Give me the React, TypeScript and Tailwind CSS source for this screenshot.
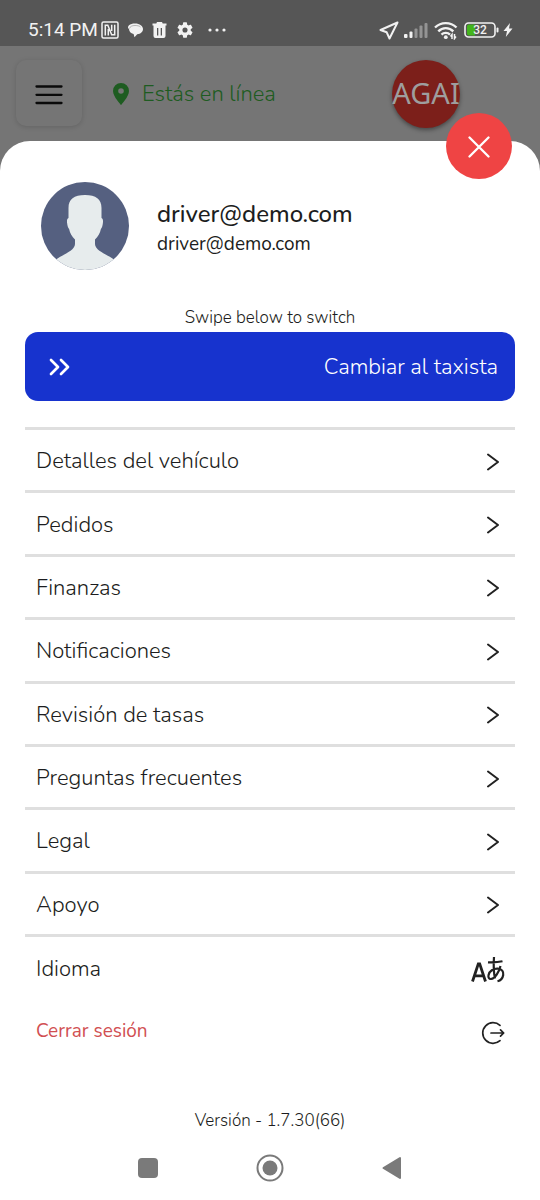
import React from 'react';

const menuItems: string[] = [
  'Detalles del vehículo',
  'Pedidos',
  'Finanzas',
  'Notificaciones',
  'Revisión de tasas',
  'Preguntas frecuentes',
  'Legal',
  'Apoyo',
];

function StatusBar() {
  return (
    <div className="flex h-[46px] items-center justify-between bg-[#565656] pt-[14px] pr-[27px] pl-7 text-[#f2f2f2]">
      <div className="flex items-center">
        <span className="w-[73px] font-['Roboto',sans-serif] text-[19px] leading-6 whitespace-nowrap">5:14 PM</span>
        <svg width="18" height="18" viewBox="0 0 18 18" fill="none" stroke="currentColor" strokeWidth="1.5" aria-hidden="true">
          <rect x="1" y="1" width="16" height="16" rx="1.5" />
          <path d="M4.300 14.500V4.300H6.800L10.700 13.700H13.700V3.800M7.300 14.500V8M10.700 3.800V10" />
        </svg>
        <svg className="ml-2" width="17" height="18" viewBox="0 0 17 18" aria-hidden="true">
          <path fill="currentColor" d="M8 2.500c4.800 0 8 2.500 8 5.500 0 2.900-2.300 4.800-5.800 5.300L7.500 16.300l-.9-3.400C3.600 12.300 2.200 10.500 2 8 .5 7.200.8 5.400 2 4.300 3.300 3 5.400 2.500 8 2.500Z" />
          <path fill="none" stroke="#999" strokeWidth=".7" d="M2.500 7.500c.5-2 2.500-3 5.500-3 2.600 0 4.400.5 5.500 1.500" />
        </svg>
        <svg className="ml-2" width="15" height="18" viewBox="0 0 15 18" aria-hidden="true">
          <path fill="currentColor" fillRule="evenodd" d="M5 1h5l.7 1.500h3.800v2H.5v-2h3.800ZM1.500 4.500h12V15a2 2 0 0 1-2 2h-8a2 2 0 0 1-2-2ZM5 7v7.500h1.300V7Zm3.700 0v7.500H10V7Z" />
        </svg>
        <svg className="ml-2.5" width="16" height="16" viewBox="2 2 20 20" fill="currentColor" aria-hidden="true">
          <path d="M19.140 12.940c.040-.300.060-.610.060-.940s-.020-.640-.070-.940l2.030-1.580a.49.49 0 0 0 .120-.610l-1.920-3.320a.49.49 0 0 0-.590-.220l-2.390.960a7 7 0 0 0-1.620-.940l-.360-2.540a.48.48 0 0 0-.480-.410h-3.840a.47.47 0 0 0-.470.410l-.360 2.540c-.590.240-1.130.570-1.620.940l-2.390-.960a.47.47 0 0 0-.590.220L2.740 8.870a.47.47 0 0 0 .120.610l2.030 1.580c-.050.300-.090.630-.090.940s.020.640.070.940l-2.030 1.580a.49.49 0 0 0-.120.610l1.920 3.320c.120.220.370.290.590.220l2.390-.960c.500.380 1.030.700 1.620.940l.360 2.540c.050.240.240.410.480.410h3.840c.240 0 .440-.170.470-.410l.360-2.540c.590-.240 1.130-.560 1.620-.940l2.390.960c.220.080.470 0 .590-.220l1.920-3.320a.47.47 0 0 0-.120-.610ZM12 15.200a3.200 3.200 0 1 1 0-6.400 3.200 3.200 0 0 1 0 6.400Z" />
        </svg>
        <svg className="ml-3.5" width="20" height="6" viewBox="0 0 20 6" fill="currentColor" aria-hidden="true">
          <circle cx="3" cy="3" r="1.600" /><circle cx="10" cy="3" r="1.600" /><circle cx="17" cy="3" r="1.600" />
        </svg>
      </div>
      <div className="flex items-center">
        <svg width="20" height="20" viewBox="0 0 20 20" fill="none" stroke="currentColor" strokeWidth="2" strokeLinejoin="round" aria-hidden="true">
          <path d="M18.500 2.500 1.500 10l6.200 2.300 2.800 6.200Z" />
        </svg>
        <svg className="ml-[5px]" width="24" height="18" viewBox="0 0 24 18" fill="currentColor" aria-hidden="true">
          <rect x="0" y="13" width="3.500" height="4" rx="1" />
          <rect x="5.500" y="10.500" width="3" height="6.500" rx="1" />
          <g opacity=".4"><rect x="10.500" y="7.500" width="3" height="9.500" rx="1" /><rect x="15.500" y="4.500" width="3" height="12.500" rx="1" /><rect x="20.500" y="2" width="3" height="15" rx="1" /></g>
        </svg>
        <svg className="ml-1.5" width="24" height="20" viewBox="0 0 24 20" fill="none" stroke="currentColor" strokeWidth="2.400" aria-hidden="true">
          <path d="M1 7.500a15.500 15.500 0 0 1 21.500 0M4.300 11.300a10.500 10.500 0 0 1 15 0M7.500 14.600a6 6 0 0 1 8.500 0" />
          <circle cx="11.800" cy="17.200" r="1.900" fill="currentColor" stroke="none" />
          <path strokeWidth="1.500" d="M18 19v-4.500l-1.500 2M20.500 14v4.500l1.500-2" />
        </svg>
        <svg className="ml-1.5" width="36" height="18" viewBox="0 0 36 18" role="img" aria-label="32%">
          <path fill="#43b41c" d="M5 3.500h6v11H5A2 2 0 0 1 3 12.500v-7A2 2 0 0 1 5 3.500Z" />
          <rect x="1" y="2" width="30" height="14" rx="3.500" fill="none" stroke="currentColor" strokeWidth="1.600" />
          <rect x="32.500" y="6.500" width="2" height="5" rx="1" fill="currentColor" />
          <text x="16" y="13" textAnchor="middle" fontSize="12" fontFamily="Roboto, sans-serif" fontWeight="500" fill="currentColor">32</text>
        </svg>
        <svg className="ml-[3px]" width="10" height="16" viewBox="0 0 10 16" fill="currentColor" aria-hidden="true">
          <path d="M7 1 .5 9H4L2.800 15 9.500 6.500H6Z" />
        </svg>
      </div>
    </div>
  );
}

function Header() {
  return (
    <header className="flex h-[95px] items-start pt-[14px] pl-4">
      <button type="button" aria-label="Menú" className="flex h-[66px] w-[66px] items-center justify-center rounded-[10px] bg-[#757575] shadow-[0_1px_5px_rgba(0,0,0,0.15)]">
        <svg className="mt-[3px]" width="28" height="22" viewBox="0 0 28 22" stroke="#0a0a0a" strokeWidth="2.300" strokeLinecap="round" aria-hidden="true">
          <path d="M1.500 2.500h25M1.500 10.800h25M1.500 19h25" />
        </svg>
      </button>
      <div className="ml-[30px] flex h-[68px] items-center text-[#1e5c21]">
        <svg width="18" height="24" viewBox="0 0 18 24" aria-hidden="true">
          <path fill="currentColor" fillRule="evenodd" d="M9 1a8 8 0 0 0-8 8c0 5.600 8 14 8 14s8-8.400 8-14a8 8 0 0 0-8-8Zm0 5.200a2.800 2.800 0 1 1 0 5.600 2.800 2.800 0 0 1 0-5.600Z" />
        </svg>
        <span className="ml-3 text-[22px] leading-7 font-light">Estás en línea</span>
      </div>
      <div className="mr-20 ml-auto flex h-[68px] w-[68px] items-center justify-center rounded-full bg-[#7c1f1a] pb-0.5 font-['Noto_Sans',sans-serif] text-[29px] leading-8 text-[#9e9e9e] shadow-[0_2px_4px_rgba(0,0,0,0.4)]">
        <span>AGAI</span>
      </div>
    </header>
  );
}

function Avatar() {
  return (
    <svg className="shrink-0" width="88" height="88" viewBox="0 0 88 88" role="img" aria-label="Foto de perfil">
      <defs>
        <clipPath id="avatar-clip"><circle cx="44" cy="44" r="44" /></clipPath>
      </defs>
      <g clipPath="url(#avatar-clip)">
        <rect width="88" height="88" fill="#556080" />
        <path fill="#e7eced" d="M44 13c11 0 16.500 4 16.500 13v10c1.500.5 1.700 2.500 1.400 5-.3 3-1 5-2 6-.8 4-2.900 7.500-5.900 10.500V62c0 7 13.500 11 19 15.500L70 90H18l-3-12.500C20.500 73 34 69 34 62v-4.500C31 54.500 28.900 51 28.100 47c-1-1-1.700-3-2-6-.3-2.500-.1-4.500 1.400-5V26c0-9 5.500-13 16.500-13Z" />
      </g>
    </svg>
  );
}

export default function App() {
  return (
    <div className="flex min-h-screen flex-col bg-[#757575] font-['Nunito','Noto_Sans',sans-serif] text-[#1c1d20]">
      <StatusBar />
      <Header />
      <main className="relative flex flex-1 flex-col rounded-t-[30px] bg-white px-[25px] pt-[41px]">
        <button type="button" aria-label="Cerrar" className="absolute -top-7 right-7 flex h-[66px] w-[66px] items-center justify-center rounded-full bg-[#ef4444] text-white">
          <svg className="mt-0.5" width="22" height="22" viewBox="0 0 22 22" fill="none" stroke="currentColor" strokeWidth="2.300" strokeLinecap="round" aria-hidden="true">
            <path d="m1.500 1.500 19 19m0-19-19 19" />
          </svg>
        </button>

        <div className="flex items-center pl-4">
          <Avatar />
          <div className="ml-7 flex flex-col pt-[3px]">
            <h1 className="text-[24px] leading-8 font-medium">driver@demo.com</h1>
            <p className="text-[19px] leading-7">driver@demo.com</p>
          </div>
        </div>

        <p className="mt-9 text-center text-[17px] leading-6 font-light">Swipe below to switch</p>
        <button type="button" className="mt-0.5 flex h-[69px] items-center justify-between rounded-[13px] bg-[#1733ce] pr-[17px] pl-6 text-[22px] leading-7 font-light text-white">
          <svg width="21" height="18" viewBox="0 0 21 18" fill="none" stroke="currentColor" strokeWidth="2.700" strokeLinecap="round" strokeLinejoin="round" aria-hidden="true">
            <path d="m2 2 7 7-7 7M12 2l7 7-7 7" />
          </svg>
          <span>Cambiar al taxista</span>
        </button>

        <nav className="mt-[26px] flex flex-1 flex-col border-t-[3px] border-[#dfdfdf]">
          {menuItems.map((label) => (
            <a key={label} href="#" className="flex min-h-[63px] flex-1 items-center justify-between border-b-[3px] border-[#dfdfdf] pt-0.5 pr-4 pl-[11px] text-[22px] leading-7 font-light">
              <span>{label}</span>
              <svg className="mt-px" width="12" height="18" viewBox="0 0 12 18" fill="none" stroke="#222" strokeWidth="2" strokeLinecap="round" strokeLinejoin="round" aria-hidden="true">
                <path d="m1 1.500 10 7.500-10 7.500" />
              </svg>
            </a>
          ))}
        </nav>

        <button type="button" className="flex h-16 items-center justify-between pr-2.5 pl-[11px] text-left text-[22px] leading-7 font-light">
          <span>Idioma</span>
          <svg className="mt-0.5" width="34" height="28" viewBox="0 0 34 28" fill="none" stroke="#222" aria-hidden="true">
            <path strokeWidth="2.800" d="M1.500 25.500 7.300 7.800h1.400l5.800 17.700M4 19.800h8.500" />
            <path strokeWidth="2.200" d="M17 6.300c5 .3 9.500.1 14.500-1M23 1c-.5 7-.5 15 1 21.500M29.500 10c-1.500 6-5.500 12.500-9.500 13-2 .2-2.900-1.500-2.500-3.800.8-4.400 5-6.700 9.200-6.500 4.300.2 6 2.900 5.500 6.300-.5 3.300-2.500 5.500-5.700 6.300" />
          </svg>
        </button>
        <button type="button" className="flex h-[60px] items-center justify-between pr-2.5 pl-[11px] text-left text-[19px] leading-7 text-[#d14f52]">
          <span>Cerrar sesión</span>
          <svg className="mt-[3px]" width="24" height="24" viewBox="0 0 24 24" fill="none" stroke="#222" strokeWidth="1.700" strokeLinecap="round" strokeLinejoin="round" aria-hidden="true">
            <path d="M19 4.400a10.300 10.300 0 1 0 0 15.200M10 12h12.500M19.500 8.800 22.700 12l-3.200 3.200" />
          </svg>
        </button>

        <p className="mt-12 text-center text-[17px] leading-6 font-light">Versión - 1.7.30(66)</p>
        <div className="mx-auto mt-[3px] grid h-16 w-full max-w-[366px] grid-cols-3 items-center justify-items-center text-[#7a7a7a]">
          <button type="button" aria-label="Recientes" className="h-5 w-5 rounded-[4px] bg-[#7a7a7a]" />
          <button type="button" aria-label="Inicio">
            <svg width="28" height="28" viewBox="0 0 28 28" aria-hidden="true">
              <circle cx="14" cy="14" r="12.500" fill="none" stroke="currentColor" strokeWidth="2" />
              <circle cx="14" cy="14" r="7.500" fill="currentColor" />
            </svg>
          </button>
          <button type="button" aria-label="Atrás">
            <svg width="20" height="24" viewBox="0 0 20 24" fill="currentColor" stroke="currentColor" strokeWidth="2" strokeLinejoin="round" aria-hidden="true">
              <path d="M18 2v20L1.500 12Z" />
            </svg>
          </button>
        </div>
      </main>
    </div>
  );
}
